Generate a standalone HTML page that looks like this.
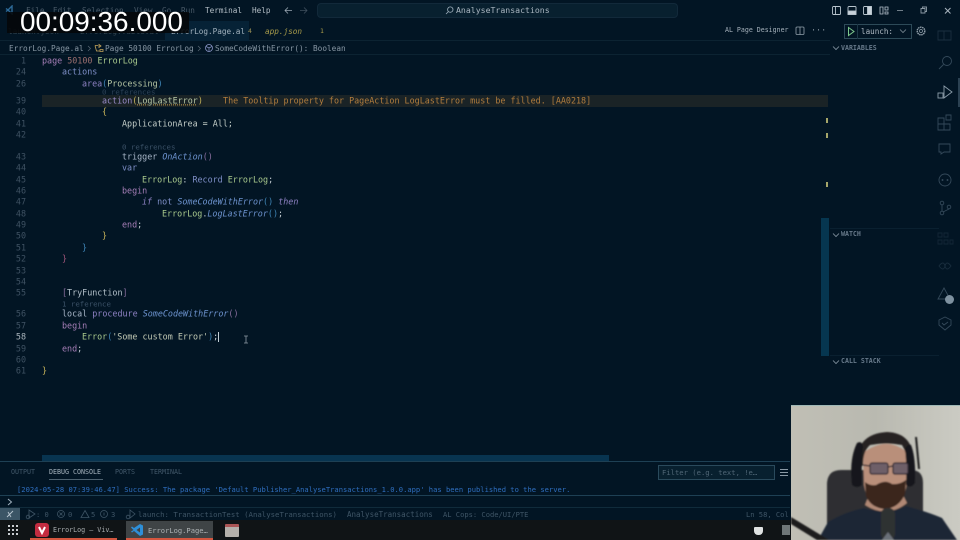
<!DOCTYPE html>
<html><head><meta charset="utf-8"><style>
html,body{margin:0;padding:0;width:960px;height:540px;overflow:hidden;background:#021524}
*{box-sizing:border-box}
.a{position:absolute;white-space:pre}
#root{position:relative;width:960px;height:540px;overflow:hidden;font-family:"DejaVu Sans Mono","Liberation Mono",monospace;font-size:8.4px;line-height:11px;color:#b9c3cc;filter:blur(.3px)}
.n{position:absolute;left:0;width:26px;text-align:right;color:#3f5263;transform:translateY(.4px)}
.l{position:absolute;white-space:pre;color:#c3ccd2;transform:translateY(.4px)}
.k{color:#a77fb8}.b{color:#7f8fc8}.g{color:#a9c98d}.i{font-style:italic;color:#6d93cf}.d{color:#8a6f9f}.y{color:#c8b45a}.c{color:#3c5268;font-size:7.4px}.t{color:#b7c7a5}.bl{color:#3f86b8}
svg{position:absolute}
.s{position:absolute;top:509px;color:#3f5566;font-size:7.1px;white-space:pre}
.m{position:absolute;top:467px;color:#42586a;font-size:6.65px;white-space:pre}
.h{position:absolute;color:#67798a;font-size:6.6px;font-weight:bold;white-space:pre}
.f{position:absolute;top:5px;color:#4a5a68;font-size:7.7px;white-space:pre}
</style></head><body><div id="root">

<div class="f" style="left:26px">File</div><div class="f" style="left:53px">Edit</div><div class="f" style="left:82px">Selection</div><div class="f" style="left:134px">View</div><div class="f" style="left:162px">Go</div><div class="f" style="left:181px">Run</div>
<div class="a" style="left:205px;top:5px;color:#b4bec6;font-size:7.7px">Terminal</div>
<div class="a" style="left:252px;top:5px;color:#b4bec6;font-size:7.7px">Help</div>
<svg style="left:284px;top:6px" width="9" height="9" viewBox="0 0 9 9"><path d="M8 4.500H1M4 1.500l-3 3 3 3" fill="none" stroke="#9aa7b2" stroke-width=".8"/></svg>
<svg style="left:299px;top:6px" width="9" height="9" viewBox="0 0 9 9"><path d="M1 4.500h7M5 1.500l3 3-3 3" fill="none" stroke="#40505e" stroke-width=".8"/></svg>
<div class="a" style="left:317px;top:3px;width:361px;height:15px;border-radius:4px;background:#08202f;border:1px solid #12293a"></div>
<svg style="left:445px;top:6px" width="9" height="9" viewBox="0 0 9 9"><circle cx="5.300" cy="3.600" r="2.700" fill="none" stroke="#9fb0bd" stroke-width=".8"/><path d="M3.400 5.600L1 8" stroke="#9fb0bd" stroke-width=".8"/></svg>
<div class="a" style="left:456px;top:5px;color:#aab6c0;font-size:8.2px">AnalyseTransactions</div>
<svg style="left:5px;top:5px" width="10" height="10" viewBox="0 0 10 10"><path d="M7 1L3 5l4 4V1zM1 3.500L3 5 1 6.500" fill="none" stroke="#2d6a98" stroke-width="1.400"/></svg>

<svg style="left:830px;top:4px" width="110" height="13" viewBox="0 0 110 13" fill="none" stroke="#b8c4cd" stroke-width=".9">
<rect x="2.500" y="2.500" width="8" height="8" rx="1"/><path d="M5.500 2.500v8"/>
<rect x="18" y="2.500" width="8" height="8" rx="1"/><rect x="18" y="7" width="8" height="3.500" fill="#c8d2da"/>
<rect x="33.500" y="2.500" width="8" height="8" rx="1"/><rect x="37.500" y="2.500" width="4" height="8" fill="#c8d2da"/>
<path d="M50 3h3v7h-3zM55 3h3v3h-3zM55 8h3v2h-3z" stroke-width=".8"/>
<path d="M67 6.500h6" stroke="#7d8b96"/>
<path d="M91 4.500h4v4.500h-4zM92.500 4.500v-1.500h4v4.500h-1.500" stroke="#8a98a3"/>
</svg>
<svg style="left:943px;top:6px" width="10" height="10" viewBox="0 0 10 10"><path d="M2 2l5.500 5.500M7.500 2L2 7.500" stroke="#a9b5bf" stroke-width="1"/></svg>

<div class="a" style="left:0;top:21px;width:830px;height:20px;border-bottom:1px solid #0c2332"></div>
<div class="a" style="left:165px;top:21px;width:84px;height:20px;background:#062236"></div>
<div class="a" style="left:8px;top:26px;color:#33444f;font-size:7.700px">launch.json</div>
<div class="a" style="left:80px;top:26px;color:#33444f;font-size:7.700px">ErrorLog.Table.al</div>
<div class="a" style="left:171px;top:26px;color:#a2b2be;font-size:7.700px">ErrorLog.Page.al</div>
<div class="a" style="left:248px;top:26px;color:#9a8f55;font-size:6.500px">4</div>
<div class="a" style="left:265px;top:26px;color:#a89b4a;font-style:italic;font-size:7.700px">app.json</div>
<div class="a" style="left:320px;top:26px;color:#a89b4a;font-size:6.500px">1</div>
<div class="a" style="left:725px;top:25px;color:#a4b0ba;font-size:6.600px">AL Page Designer</div>
<svg style="left:795px;top:26px" width="10" height="10" viewBox="0 0 10 10"><rect x="1" y="1" width="8" height="7.500" rx="1" fill="none" stroke="#93a1ac" stroke-width=".8"/><path d="M5 1v7.500" stroke="#93a1ac" stroke-width=".8"/></svg>
<div class="a" style="left:811px;top:25px;color:#83919c">···</div>

<div class="a" style="left:844px;top:24px;width:68px;height:15px;border:1px solid #2d4a58"></div>
<div class="a" style="left:857px;top:24px;width:1px;height:15px;background:#1d3746"></div>
<svg style="left:846px;top:26px" width="10" height="11" viewBox="0 0 10 11"><path d="M2.500 1.500L8 5.500l-5.500 4z" fill="none" stroke="#7dc98d" stroke-width="1"/></svg>
<div class="a" style="left:861px;top:26px;color:#aeb9c2;font-size:7.600px">launch:</div>
<svg style="left:899px;top:28px" width="8" height="6" viewBox="0 0 8 6"><path d="M1 1.500l3 3 3-3" fill="none" stroke="#7d8b96" stroke-width=".8"/></svg>
<svg style="left:915px;top:25px" width="12" height="12" viewBox="0 0 12 12"><circle cx="6" cy="6" r="3.800" fill="none" stroke="#93a1ac" stroke-width="1.400" stroke-dasharray="1.500 .6"/><circle cx="6" cy="6" r="1.500" fill="none" stroke="#93a1ac" stroke-width=".7"/></svg>

<div class="a" style="left:0;top:41px;width:830px;height:14px;border-bottom:1px solid #0c2332"></div>
<div class="a" style="left:9px;top:43px;color:#8796a3;font-size:7.750px">ErrorLog.Page.al</div>
<svg style="left:87px;top:45px" width="5" height="7" viewBox="0 0 5 7"><path d="M1 1l2.500 2.500L1 6" fill="none" stroke="#5b6a76" stroke-width=".7"/></svg>
<svg style="left:94px;top:43px" width="10" height="10" viewBox="0 0 10 10"><path d="M1 2.500h3M1 2.500l1.500 5.500h3M5 1.500l2 1.500-2 1.500zM6 6.500h3v2H6z" fill="none" stroke="#c3a35a" stroke-width=".8"/></svg>
<div class="a" style="left:105px;top:43px;color:#8796a3;font-size:7.750px">Page 50100 ErrorLog</div>
<svg style="left:197px;top:45px" width="5" height="7" viewBox="0 0 5 7"><path d="M1 1l2.500 2.500L1 6" fill="none" stroke="#5b6a76" stroke-width=".7"/></svg>
<svg style="left:204px;top:43px" width="10" height="10" viewBox="0 0 10 10"><circle cx="5" cy="5" r="3.500" fill="none" stroke="#8a96c8" stroke-width=".8"/><path d="M2 3.500L5 5l3-1.500M5 5v3.500" fill="none" stroke="#8a96c8" stroke-width=".7"/></svg>
<div class="a" style="left:215px;top:43px;color:#8796a3;font-size:7.750px">SomeCodeWithError(): Boolean</div>

<div class="a" style="left:42px;top:95px;width:786px;height:12px;background:#1a2326"></div>

<div class="n" style="top:55px">1</div><div class="l" style="left:42px;top:55px"><span class="k">page</span> <span class="d" style="color:#9c6f6f">50100</span> <span class="g">ErrorLog</span></div>
<div class="n" style="top:66px">24</div><div class="l" style="left:62px;top:66px"><span class="b">actions</span></div>
<div class="n" style="top:78px">26</div><div class="l" style="left:82px;top:78px"><span class="k" style="color:#8f82c4">area</span><span class="bl">(</span><span class="t">Processing</span><span class="bl">)</span></div>
<div class="l c" style="left:102px;top:86px;opacity:.75">0 references</div>
<div class="n" style="top:95px">39</div><div class="l" style="left:102px;top:95px"><span class="b" style="color:#9a8cc8">action</span><span class="y">(</span><span class="t" style="text-decoration:underline dotted #c39a4a">LogLastError</span><span class="y">)</span><span style="color:#b37e3e">    The Tooltip property for PageAction LogLastError must be filled. [AA0218]</span></div>
<div class="n" style="top:106px">40</div><div class="l y" style="left:102px;top:106px">{</div>
<div class="n" style="top:118px">41</div><div class="l" style="left:122px;top:118px;color:#c3cdc8">ApplicationArea = All;</div>
<div class="n" style="top:129px">42</div>
<div class="l c" style="left:122px;top:141px">0 references</div>
<div class="n" style="top:151px">43</div><div class="l" style="left:122px;top:151px"><span style="color:#a9b7c9">trigger</span> <span class="i">OnAction</span><span class="d">()</span></div>
<div class="n" style="top:162px">44</div><div class="l b" style="left:122px;top:162px">var</div>
<div class="n" style="top:174px">45</div><div class="l" style="left:142px;top:174px"><span class="g">ErrorLog</span>: <span class="b">Record</span> <span class="g">ErrorLog</span>;</div>
<div class="n" style="top:185px">46</div><div class="l k" style="left:122px;top:185px">begin</div>
<div class="n" style="top:196px">47</div><div class="l" style="left:142px;top:196px"><span class="i" style="color:#8f82c4">if</span> <span class="b">not</span> <span class="i">SomeCodeWithError</span><span class="bl">()</span> <span class="i" style="color:#8f82c4">then</span></div>
<div class="n" style="top:208px">48</div><div class="l" style="left:162px;top:208px"><span class="g">ErrorLog</span>.<span class="i">LogLastError</span><span class="bl">()</span>;</div>
<div class="n" style="top:219px">49</div><div class="l" style="left:122px;top:219px"><span class="k">end</span>;</div>
<div class="n" style="top:230px">50</div><div class="l y" style="left:102px;top:230px">}</div>
<div class="n" style="top:242px">51</div><div class="l bl" style="left:82px;top:242px">}</div>
<div class="n" style="top:253px">52</div><div class="l" style="left:62px;top:253px;color:#a0567a">}</div>
<div class="n" style="top:265px">53</div>
<div class="n" style="top:276px">54</div>
<div class="n" style="top:287px">55</div><div class="l" style="left:62px;top:287px"><span class="d">[</span><span style="color:#b3c0c9">TryFunction</span><span class="d">]</span></div>
<div class="l c" style="left:62px;top:298px">1 reference</div>
<div class="n" style="top:308px">56</div><div class="l" style="left:62px;top:308px"><span style="color:#a9b7c9">local</span> <span style="color:#8f82c4">procedure</span> <span class="i">SomeCodeWithError</span><span class="d">()</span></div>
<div class="n" style="top:320px">57</div><div class="l k" style="left:62px;top:320px">begin</div>
<div class="n" style="top:331px;color:#aab5bd">58</div><div class="l" style="left:82px;top:331px"><span class="g">Error</span><span class="bl">(</span><span style="color:#c2c9b4">'Some custom Error'</span><span class="bl">)</span>;</div>
<div class="a" style="left:218px;top:332px;width:1px;height:10px;background:#c4d0d8"></div>
<svg style="left:243px;top:335px" width="6" height="10" viewBox="0 0 6 10"><path d="M1 1h4M3 1v7M1 8h4" stroke="#8f9ba5" stroke-width=".8" fill="none"/></svg>
<div class="n" style="top:343px">59</div><div class="l" style="left:62px;top:343px"><span class="k">end</span>;</div>
<div class="n" style="top:354px">60</div>
<div class="n" style="top:365px">61</div><div class="l y" style="left:42px;top:365px">}</div>

<div class="a" style="left:821px;top:218px;width:8px;height:138px;background:#063650"></div>
<div class="a" style="left:826px;top:118px;width:2px;height:5px;background:#a6a66a"></div>
<div class="a" style="left:826px;top:133px;width:2px;height:5px;background:#a6a66a"></div>
<div class="a" style="left:826px;top:182px;width:2px;height:5px;background:#a6a66a"></div>

<div class="a" style="left:42px;top:455px;width:567px;height:6px;background:#083450"></div>

<svg style="left:832px;top:45px" width="8" height="6" viewBox="0 0 8 6"><path d="M1 1.500l3 3 3-3" fill="none" stroke="#8998a5" stroke-width=".8"/></svg>
<div class="h" style="left:841px;top:43px">VARIABLES</div>
<div class="a" style="left:830px;top:228px;width:109px;height:1px;background:#0a2030"></div>
<svg style="left:832px;top:232px" width="8" height="6" viewBox="0 0 8 6"><path d="M1 1.500l3 3 3-3" fill="none" stroke="#8998a5" stroke-width=".8"/></svg>
<div class="h" style="left:841px;top:229px">WATCH</div>
<div class="a" style="left:830px;top:355px;width:109px;height:1px;background:#0a2030"></div>
<svg style="left:832px;top:359px" width="8" height="6" viewBox="0 0 8 6"><path d="M1 1.500l3 3 3-3" fill="none" stroke="#8998a5" stroke-width=".8"/></svg>
<div class="h" style="left:841px;top:356px">CALL STACK</div>

<svg style="left:936px;top:28px" width="20" height="320" viewBox="0 0 20 320" fill="none" stroke="#34495a" stroke-width=".9">
<path d="M2 3h6v9H2zM8 3h7v9H8z" opacity=".5"/>
<circle cx="11" cy="33" r="4.500"/><path d="M7.500 36.500L3 41"/>
<path d="M8 58l8 6-8 6z" stroke="#8d9eab"/><rect x="2" y="65" width="5" height="5" stroke="#8d9eab"/>
<path d="M2 90h6v6H2zM2 96h6v6H2zM8 96h6v6H8zM10 87h5v5h-5z"/>
<path d="M3 116h11v8H8l-3 2v-2H3z"/>
<circle cx="9" cy="152" r="6"/><circle cx="6.500" cy="152" r=".5"/><circle cx="11.500" cy="152" r=".5"/>
<circle cx="6" cy="175" r="1.800"/><circle cx="6" cy="185" r="1.800"/><circle cx="13" cy="179" r="1.800"/><path d="M6 177v6M13 181l-6 3"/>
<path d="M2 205h4v4H2zM8 205h4v4H8zM2 212h4v4H2zM8 212h4v4H8zM14 212h3v4h-3z" opacity=".35"/>
<path d="M3 238c3-4 5-4 6 0s3 4 6 0c-3-4-5-4-6 0s-3 4-6 0z" opacity=".45"/>
<path d="M8 260l6 11H2z"/>
<path d="M3 292l6-3 6 3v5l-6 5-6-5z"/><path d="M6 295l2 2 4-3"/>
</svg>
<div class="a" style="left:945px;top:295px;width:9px;height:9px;border-radius:5px;background:#7e91a0"></div>
<div class="a" style="left:958px;top:78px;width:2px;height:29px;background:#2b4152"></div>

<div class="a" style="left:0;top:461px;width:790px;height:1px;background:#1e4054"></div>
<div class="m" style="left:11px">OUTPUT</div>
<div class="m" style="left:49px;color:#a6b3bd">DEBUG CONSOLE</div>
<div class="a" style="left:49px;top:479px;width:54px;height:1px;background:#4f6371"></div>
<div class="m" style="left:115px">PORTS</div>
<div class="m" style="left:150px">TERMINAL</div>
<div class="a" style="left:658px;top:465px;width:117px;height:15px;background:#08202f;border:1px solid #2a4a5c"></div>
<div class="a" style="left:662px;top:467px;color:#506676;font-size:7.200px">Filter (e.g. text, !e…</div>
<div class="a" style="left:780px;top:469px;width:8px;height:7px;background:repeating-linear-gradient(#8a99a5 0 1px,transparent 1px 3px)"></div>
<div class="a" style="left:17px;top:484px;color:#2f6fc0;font-size:7.130px">[2024-05-28 07:39:46.47] Success: The package 'Default Publisher_AnalyseTransactions_1.0.0.app' has been published to the server.</div>
<div class="a" style="left:0;top:495px;width:790px;height:1px;background:#1e4054"></div>
<svg style="left:6px;top:498px" width="8" height="8" viewBox="0 0 8 8"><path d="M2 1l3.500 3L2 7" fill="none" stroke="#9fb0bd" stroke-width="1"/></svg>

<div class="a" style="left:0;top:507px;width:790px;height:1px;background:#102b3b"></div>
<div class="a" style="left:0;top:508px;width:20px;height:13px;background:#3b5566"></div>
<svg style="left:5px;top:509px" width="10" height="10" viewBox="0 0 10 10"><path d="M2 8l6-6M6 8L3 3" stroke="#b8c6d0" stroke-width=".9"/></svg>
<svg style="left:25px;top:508px" width="115" height="12" viewBox="0 0 115 12" fill="none" stroke="#3f5566" stroke-width=".8"><path d="M4 2l6 4-6 4z"/><circle cx="3" cy="9" r="1.800"/><circle cx="36" cy="6" r="3.500"/><path d="M34.500 4.500l3 3M37.500 4.500l-3 3"/><path d="M60 2.500l4 7h-8z"/><circle cx="79" cy="6" r="3.500"/><path d="M79 4.500v3"/><path d="M105 2l5 4-5 4z"/><circle cx="103" cy="9" r="1.800"/></svg>
<div class="s" style="left:36px">: 0</div>
<div class="s" style="left:68px">0</div>
<div class="s" style="left:91px">5</div>
<div class="s" style="left:111px">3</div>
<div class="s" style="left:138px;font-size:7.350px">launch: TransactionTest (AnalyseTransactions)</div>
<div class="s" style="left:347px;font-size:7.500px">AnalyseTransactions</div>
<div class="s" style="left:443px">AL Cops: Code/UI/PTE</div>
<div class="s" style="left:746px">Ln 58, Col</div>

<div class="a" style="left:0;top:520px;width:960px;height:20px;background:#101416"></div>
<div class="a" style="left:8px;top:525px;width:10px;height:10px;background:repeating-linear-gradient(90deg,#c8ccd0 0 2px,transparent 2px 4px);-webkit-mask:repeating-linear-gradient(#000 0 2px,transparent 2px 4px)"></div>
<div class="a" style="left:126px;top:521px;width:87px;height:19px;background:#3f4446"></div>
<div class="a" style="left:30px;top:538px;width:87px;height:2px;background:#d3563f"></div>
<div class="a" style="left:126px;top:538px;width:87px;height:2px;background:#d3563f"></div>
<div class="a" style="left:35px;top:523px;width:14px;height:14px;border-radius:3px;background:#c32c40"></div>
<svg style="left:35px;top:523px" width="14" height="14" viewBox="0 0 14 14"><path d="M4 4l3 6 3-6" fill="none" stroke="#fff" stroke-width="2"/></svg>
<div class="a" style="left:53px;top:525px;color:#a6abad;font-size:6.700px">ErrorLog – Viv…</div>
<svg style="left:130px;top:523px" width="14" height="14" viewBox="0 0 14 14"><path d="M10 1l3 1.500v9L10 13 4 8l-2 1.500-1-1L3.500 7 1 4.500l1-1L4 5zM10 4.500L6.500 7 10 9.500z" fill="#2e8fd8"/></svg>
<div class="a" style="left:148px;top:525px;color:#aeb3b5;font-size:7.100px">ErrorLog.Page…</div>
<div class="a" style="left:225px;top:524px;width:14px;height:13px;border-radius:1px;background:linear-gradient(#a55 0 3px,#b4b0ab 3px)"></div>
<div class="a" style="left:754px;top:527px;width:9px;height:8px;border-radius:1px 1px 4px 4px;background:#dfe2e2"></div>
<div class="a" style="left:782px;top:525px;width:8px;height:10px;background:#6f7677"></div>

<svg style="left:791px;top:405px" width="169" height="135" viewBox="0 0 169 135">
<defs><filter id="f"><feGaussianBlur stdDeviation=".9"/></filter>
<linearGradient id="w" x1="0" x2="1"><stop offset="0" stop-color="#c0bfb5"/><stop offset=".5" stop-color="#b9b9b0"/><stop offset="1" stop-color="#cbcbc3"/></linearGradient></defs>
<rect width="169" height="135" fill="url(#w)"/>
<g filter="url(#f)">
<path d="M36 135V78q1-13 14-13h70q12 0 12 13v57z" fill="#2d2e31"/>
<path d="M27 135l10-18q16-10 36-14q24 8 42-2q22 6 36 12l15 22z" fill="#1e2636"/>
<path d="M74 100q22 14 42-2l-4-8H78z" fill="#b08874"/>
<path d="M72 48q24-18 45 0l-1 30q-4 26-22 28q-17-2-21-26z" fill="#b98f7a"/>
<path d="M74 77q5 4 11 3q9-6 16-1q7 1 14-4l-1 14q-6 14-20 15q-14-1-19-13z" fill="#3a261c"/>
<path d="M66 66q-4-37 30-39q30 1 26 38l-6-7q0-10-5-18q-16-3-32 0q-7 6-7 20z" fill="#272220"/>
<path d="M61 80q-3-26 5-42q5-3 6 4q-2 14-1 38q-5 4-10 0zM120 40q5 12 4 38q-4 6-9 2q1-20-1-36q3-6 6-4z" fill="#17181a"/>
<rect x="79" y="58" width="18" height="11" rx="2" fill="#6e5f68" stroke="#2a2530" stroke-width="1.200"/><rect x="102" y="58" width="15" height="11" rx="2" fill="#6e5f68" stroke="#2a2530" stroke-width="1.200"/>
<path d="M72 60l7 1M97 62l5-1" stroke="#2a2530" stroke-width="1.200"/>
<rect x="90" y="103" width="14" height="32" rx="6" fill="#2f3033"/>
<path d="M97 127l6 8h-12z" fill="#6a7078"/>
<path d="M0 112l38 23h-12l-26-16z" fill="#1a1a1c"/>
<path d="M124 32l2 0l3 32h-2z" fill="#1c1c1e"/>
</g>
</svg>
<div class="a" style="left:791px;top:405px;width:169px;height:1px;background:#9fb8b6"></div>

<div class="a" style="left:7px;top:12px;width:182px;height:21px;background:#050709;opacity:.88"></div>
<div class="a" style="left:20px;top:3px;color:#fff;font-family:'Liberation Sans',sans-serif;font-size:27.900px;line-height:38px">00:09:36.000</div>
</div></body></html>
